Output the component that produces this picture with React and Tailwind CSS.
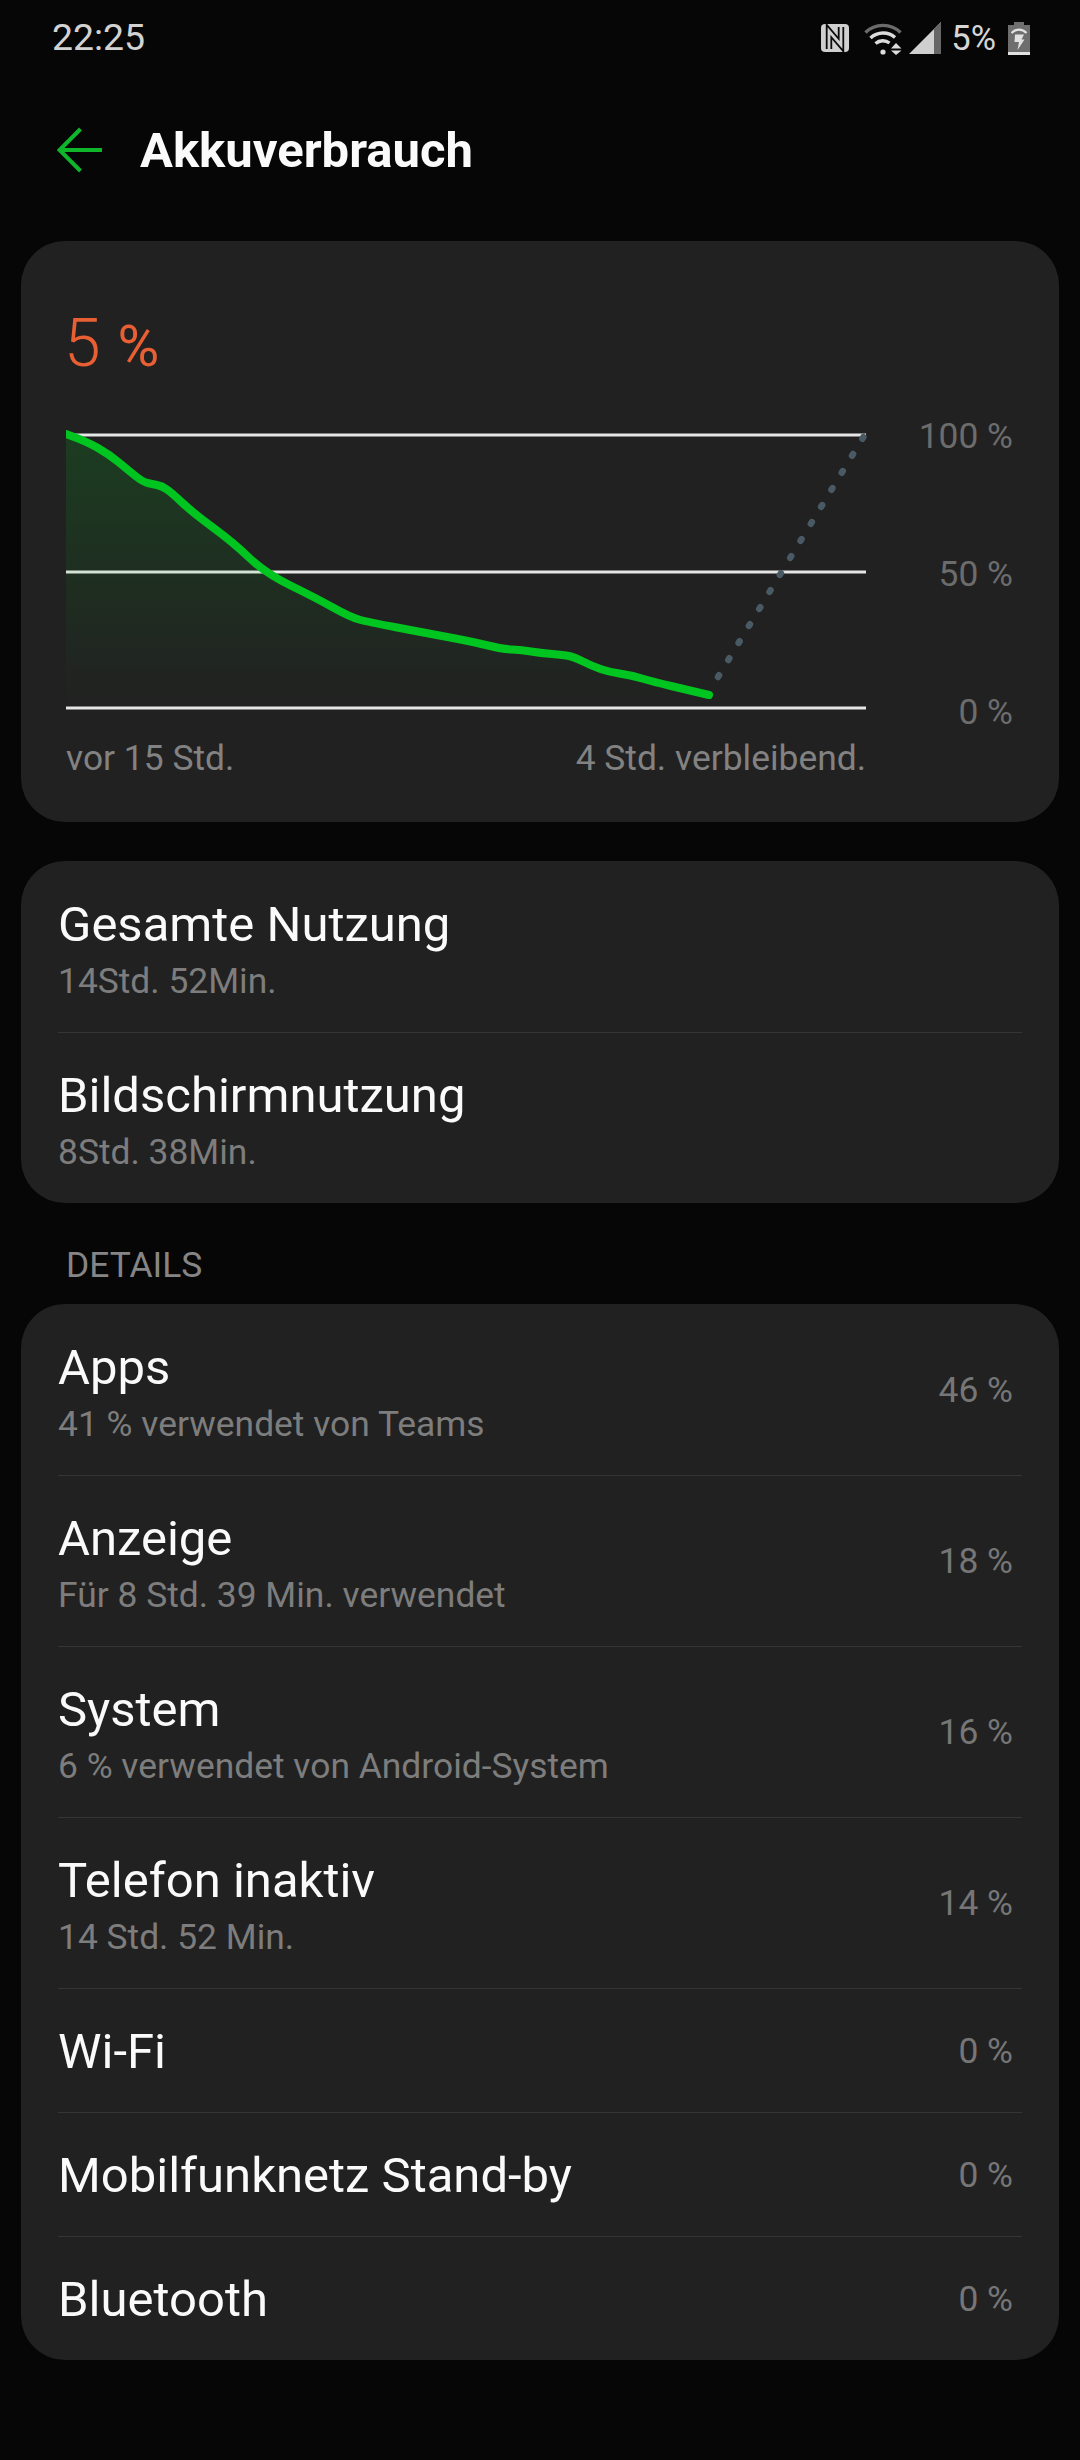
import React from 'react';

const curve = [
  [66, 434], [86, 441], [110, 455], [128, 470], [143, 482], [152, 484], [162, 486], [172, 493], [192, 512], [234, 543],
  [265, 573], [316, 598], [350, 617], [368, 622], [426, 633], [474, 642], [502, 649], [522, 650],
  [540, 653], [564, 655], [574, 657], [592, 666], [609, 672], [630, 675], [654, 682], [688, 690], [709, 695],
];

// smooth the hand read points with midpoints
const smooth = (pts) => {
  let d = `M${pts[0][0]} ${pts[0][1]}`;
  for (let i = 1; i < pts.length - 1; i++) {
    const mx = (pts[i][0] + pts[i + 1][0]) / 2;
    const my = (pts[i][1] + pts[i + 1][1]) / 2;
    d += ` Q${pts[i][0]} ${pts[i][1]} ${mx} ${my}`;
  }
  const last = pts[pts.length - 1];
  return d + ` L${last[0]} ${last[1]}`;
};

const linePath = smooth(curve);
const areaPath = `${linePath} L709 708 L66 708 Z`;

const details = [
  { title: 'Apps', sub: '41 % verwendet von Teams', value: '46 %' },
  { title: 'Anzeige', sub: 'Für 8 Std. 39 Min. verwendet', value: '18 %' },
  { title: 'System', sub: '6 % verwendet von Android-System', value: '16 %' },
  { title: 'Telefon inaktiv', sub: '14 Std. 52 Min.', value: '14 %' },
  { title: 'Wi-Fi', value: '0 %' },
  { title: 'Mobilfunknetz Stand-by', value: '0 %' },
  { title: 'Bluetooth', value: '0 %' },
];

const Row = ({ title, sub, value }) => (
  <div className={`flex items-center justify-between border-t border-[#353535] first:border-t-0 ${sub ? 'h-[171px] pt-[6px]' : 'h-[124px] pt-[2px]'}`}>
    <div>
      <div className="text-[49px] leading-[56px] text-[#fafafa]">{title}</div>
      {sub && <div className="mt-[6px] text-[35.4px] leading-[44px] text-[#7d7d7d]">{sub}</div>}
    </div>
    {value && <span className={`pr-[9px] text-[35.4px] text-[#767676] ${sub ? 'mb-[4px]' : ''}`}>{value}</span>}
  </div>
);

const StatusIcons = () => (
  <div className="flex items-center">
    {/* NFC */}
    <svg width="28" height="28" viewBox="0 0 28 28" className="mr-[15px]">
      <rect width="28" height="28" rx="4" fill="#cfcfcf" />
      <path d="M8 25V7L20 21V3" fill="none" stroke="#0a0a0a" strokeWidth="6.4" />
      <path d="M8 28V7L20 21V0" fill="none" stroke="#cfcfcf" strokeWidth="2.8" />
    </svg>
    {/* wifi */}
    <svg width="40" height="33" viewBox="0 0 40 33" className="mr-[5px]">
      <path d="M1.5 10.5C11 1 27 1 36.5 10.5" fill="none" stroke="#6b6b6b" strokeWidth="3.4" />
      <path d="M6.5 16C13.5 9.5 24.5 9.5 31 15.5" fill="none" stroke="#dcdcdc" strokeWidth="3.4" />
      <path d="M11.5 21.5c4.3-3.6 10-3.6 14-.5" fill="none" stroke="#dcdcdc" strokeWidth="3.4" />
      <circle cx="19" cy="30" r="2.6" fill="#dcdcdc" />
      <path d="M27 26.5l5-5.5 5.5 5.5zM27 28.5h10.5l-5.5 4.5z" fill="#dcdcdc" />
    </svg>
    {/* signal */}
    <svg width="32" height="32" viewBox="0 0 32 32" className="mr-[10px]">
      <path d="M0 32L32 0V32Z" fill="#cfcfcf" />
      <path d="M25 7L32 0V32H25Z" fill="#666" />
    </svg>
    <span className="mr-[12px] text-[34.5px] leading-none text-[#d6d6d6]">5%</span>
    {/* battery */}
    <svg width="22" height="33" viewBox="0 0 22 33" className="mr-[50px]">
      <path d="M6 0H16V3H22V33H0V3H6Z" fill="#6e6e6e" />
      <rect x="0" y="30" width="22" height="3" fill="#e2e2e2" />
      <path d="M3.5 11C8 6.5 14 6.5 18.5 11" fill="none" stroke="#e2e2e2" strokeWidth="2.2" />
      <path d="M7 12.5H16L13.5 17.5H16.5L9.5 28L11 20H6.5Z" fill="#e2e2e2" />
    </svg>
  </div>
);

export default function App() {
  return (
    <div className="h-[2460px] w-[1080px] overflow-hidden bg-[#060606] font-['Roboto',sans-serif]">
      {/* status bar */}
      <div className="flex h-[76px] items-center justify-between pl-[52px]">
        <span className="text-[37.4px] leading-none text-[#d2d2d2]">22:25</span>
        <StatusIcons />
      </div>

      {/* header */}
      <div className="flex h-[148px] items-center pl-[57px]">
        <svg width="46" height="46" viewBox="0 0 46 46" className="mr-[37px]">
          <path d="M45 23H3M23.5 2L2.5 23L23.5 44" fill="none" stroke="#0fb62a" strokeWidth="4" />
        </svg>
        <h1 className="text-[49px] font-bold leading-none text-[#fafafa]">Akkuverbrauch</h1>
      </div>

      <div className="mx-[21px] mt-[17px] flex flex-col">
        {/* chart card */}
        <div className="h-[581px] rounded-[44px] bg-[#212121] pl-[45px] pr-[46px] pt-[69px]">
          <div className="-ml-[2px] flex h-[68px] items-baseline text-[#e85f33]">
            <span className="text-[66px] font-light leading-[68px]">5</span>
            <span className="ml-[17px] text-[57px] leading-[68px]">%</span>
          </div>
          <div className="mt-[47px] flex justify-between">
            <div className="w-[800px]">
              <svg width="806" height="286" viewBox="66 425 806 286" className="block">
                <defs>
                  <linearGradient id="area" x1="0" y1="0" x2="0" y2="1">
                    <stop offset="0" stopColor="#00c41f" stopOpacity="0.17" />
                    <stop offset="1" stopColor="#00c41f" stopOpacity="0" />
                  </linearGradient>
                </defs>
                <path d="M66 435H866M66 572H866M66 708H866" stroke="#e6e6e6" strokeWidth="3" fill="none" />
                <path d={areaPath} fill="url(#area)" />
                <path d="M718 677L864 436" stroke="#4a5a64" strokeWidth="6.5" strokeLinecap="round" strokeDasharray="2 17.9" fill="none" />
                <path d={linePath} stroke="#00c41f" strokeWidth="8" strokeLinecap="round" strokeLinejoin="round" fill="none" />
              </svg>
              <div className="mt-[25px] flex justify-between text-[35.4px] leading-[44px] text-[#828282]">
                <span>vor 15 Std.</span>
                <span>4 Std. verbleibend.</span>
              </div>
            </div>
            <div className="-mt-[11px] flex h-[320px] flex-col items-end justify-between text-[35.4px] leading-[44px] text-[#6c6c6c]">
              <span>100 %</span>
              <span>50 %</span>
              <span>0 %</span>
            </div>
          </div>
        </div>

        {/* usage card */}
        <div className="mt-[39px] rounded-[44px] bg-[#212121] px-[37px]">
          <Row title="Gesamte Nutzung" sub="14Std. 52Min." />
          <Row title="Bildschirmnutzung" sub="8Std. 38Min." />
        </div>

        <div className="flex h-[101px] items-center pl-[45px] pt-[24px] text-[35.4px] text-[#858585]">DETAILS</div>

        {/* details card */}
        <div className="rounded-[44px] bg-[#212121] px-[37px]">
          {details.map((row) => (
            <Row key={row.title} {...row} />
          ))}
        </div>
      </div>
    </div>
  );
}
